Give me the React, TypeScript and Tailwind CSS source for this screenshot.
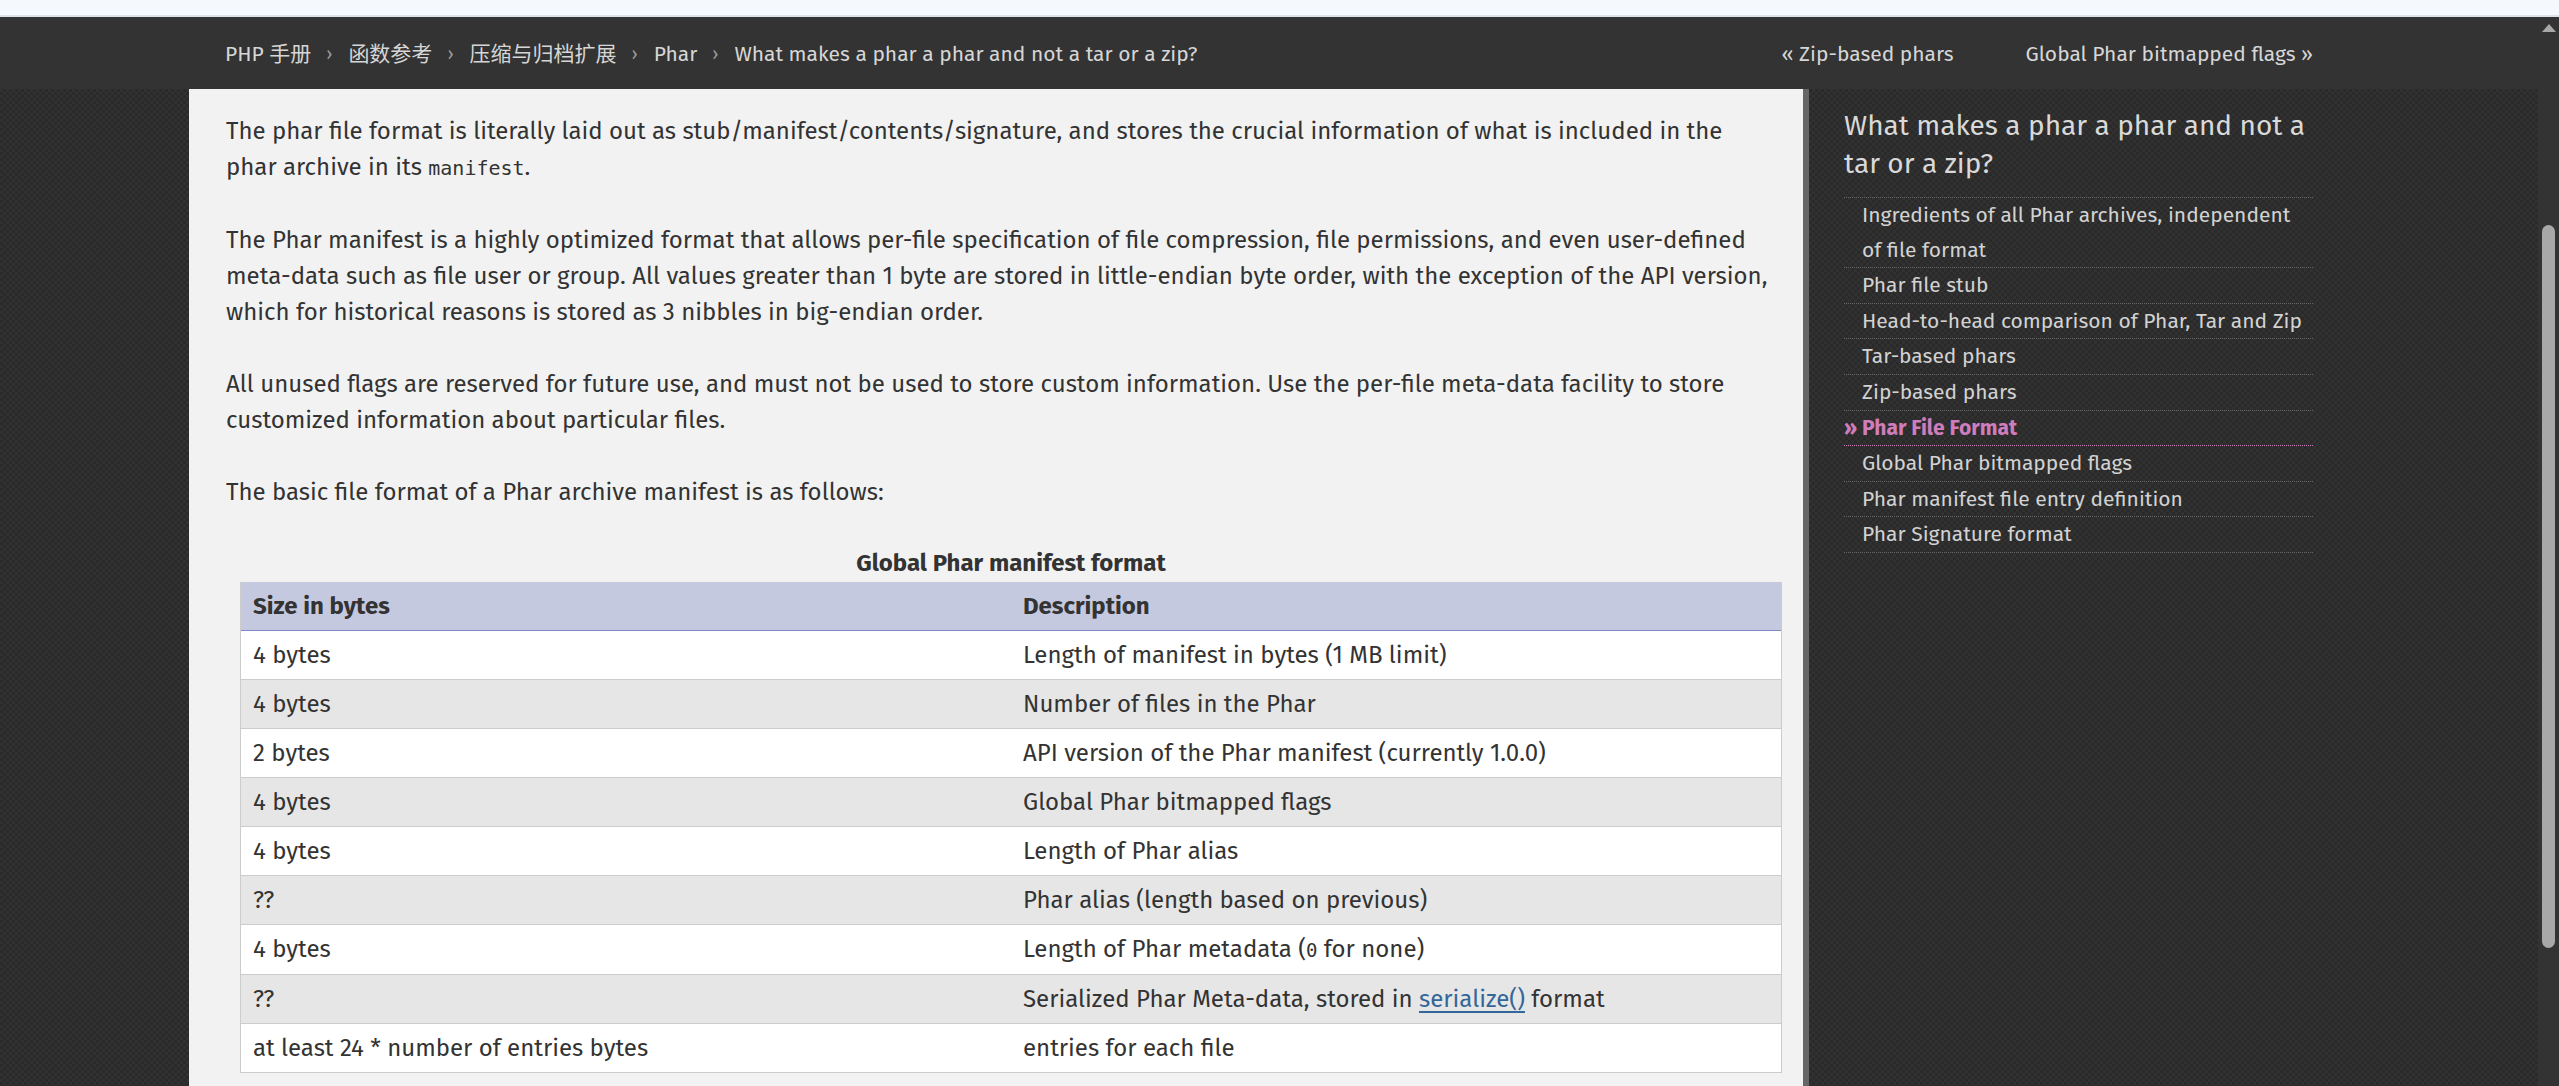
import React from "react";

const FONT = { fontFamily: '"Fira Sans", Roboto, "Noto Sans CJK SC", sans-serif' };

const rows: [string, React.ReactNode][] = [
  ["4 bytes", "Length of manifest in bytes (1 MB limit)"],
  ["4 bytes", "Number of files in the Phar"],
  ["2 bytes", "API version of the Phar manifest (currently 1.0.0)"],
  ["4 bytes", "Global Phar bitmapped flags"],
  ["4 bytes", "Length of Phar alias"],
  ["??", "Phar alias (length based on previous)"],
  [
    "4 bytes",
    <>
      Length of Phar metadata (<code className="font-['DejaVu_Sans_Mono',monospace] text-[19px]">0</code> for none)
    </>,
  ],
  [
    "??",
    <>
      Serialized Phar Meta-data, stored in{" "}
      <a className="text-[#336699] underline decoration-[#336699] underline-offset-4">serialize()</a> format
    </>,
  ],
  ["at least 24 * number of entries bytes", "entries for each file"],
];

const toc: { label: React.ReactNode; active?: boolean }[] = [
  {
    label: (
      <>
        Ingredients of all Phar archives, independent
        <br />
        of file format
      </>
    ),
  },
  { label: "Phar file stub" },
  { label: "Head-to-head comparison of Phar, Tar and Zip" },
  { label: "Tar-based phars" },
  { label: "Zip-based phars" },
  { label: "Phar File Format", active: true },
  { label: "Global Phar bitmapped flags" },
  { label: "Phar manifest file entry definition" },
  { label: "Phar Signature format" },
];

const crumbs = ["PHP 手册", "函数参考", "压缩与归档扩展", "Phar", "What makes a phar a phar and not a tar or a zip?"];

export default function App() {
  const pattern =
    "bg-[#2d2d2d] bg-[image:repeating-conic-gradient(#2a2a2a_0_25%,#313131_0_50%)] bg-[length:6px_6px]";
  return (
    <div className="w-[2559px] h-[1086px] overflow-hidden flex flex-col bg-[#333]" style={FONT}>
      <div className="h-[17px] shrink-0 bg-[#f5f8fd] border-b-2 border-[#dde1e8]" />
      <div className="flex-1 flex min-h-0">
        <div className="flex-1 flex flex-col min-w-0">
          {/* header */}
          <header className="h-[72px] shrink-0 bg-[#333] flex items-center pt-[3px] pl-[225px] pr-[225px] text-[21px] text-[#d6d6d6]">
            <nav className="flex items-center">
              {crumbs.map((c, i) => (
                <React.Fragment key={i}>
                  {i > 0 && <span className="pl-[15px] pr-[16px] text-[#9a9a9a] text-[18px]">›</span>}
                  <span>{c}</span>
                </React.Fragment>
              ))}
            </nav>
            <div className="ml-auto flex items-center gap-[72px]">
              <span>« Zip-based phars</span>
              <span>Global Phar bitmapped flags »</span>
            </div>
          </header>

          <div className={"flex-1 flex min-h-0 " + pattern}>
            <div className="w-[189px] shrink-0" />
            {/* main content */}
            <main className="w-[1614px] shrink-0 bg-[#f2f2f2] pl-[37px] pr-[21px] pt-[24px] text-[24px] leading-[36px] text-[#333]">
              <p className="whitespace-nowrap">
                The phar file format is literally laid out as stub/manifest/contents/signature, and stores the crucial
                information of what is included in the
                <br />
                phar archive in its{" "}
                <code className="font-['DejaVu_Sans_Mono',monospace] text-[20px]">manifest</code>.
              </p>
              <p className="mt-[36px] whitespace-nowrap">
                The Phar manifest is a highly optimized format that allows per-file specification of file compression,
                file permissions, and even user-defined
                <br />
                meta-data such as file user or group. All values greater than 1 byte are stored in little-endian byte
                order, with the exception of the API version,
                <br />
                which for historical reasons is stored as 3 nibbles in big-endian order.
              </p>
              <p className="mt-[36px] whitespace-nowrap">
                All unused flags are reserved for future use, and must not be used to store custom information. Use the
                per-file meta-data facility to store
                <br />
                customized information about particular files.
              </p>
              <p className="mt-[36px]">The basic file format of a Phar archive manifest is as follows:</p>

              <div className="mt-[35px] ml-[14px]">
                <div className="text-center font-bold h-[37px]">Global Phar manifest format</div>
                <div className="border-l border-r border-[#cccccc]">
                  <div className="grid grid-cols-2 bg-[#c4c9df] border-b border-[#7e8bc2] font-bold">
                    <div className="px-[12px] py-[6px]">Size in bytes</div>
                    <div className="px-[12px] py-[6px]">Description</div>
                  </div>
                  {rows.map(([a, b], i) => (
                    <div
                      key={i}
                      className={
                        "grid grid-cols-2 border-b border-[#cccccc] " + (i % 2 === 0 ? "bg-white" : "bg-[#e6e6e6]")
                      }
                    >
                      <div className="px-[12px] py-[6px]">{a}</div>
                      <div className="px-[12px] py-[6px]">{b}</div>
                    </div>
                  ))}
                </div>
              </div>
            </main>
            <div className="w-[6px] shrink-0 bg-[#666]" />
            {/* sidebar */}
            <aside className="flex-1 pl-[35px] pt-[18px]">
              <div className="w-[469px]">
                <h2 className="text-[28px] leading-[38px] text-[#d9d9d9] whitespace-nowrap">
                  What makes a phar a phar and not a
                  <br />
                  tar or a zip?
                </h2>
                <ul className="mt-[14px] border-t border-dotted border-[#666] text-[21px] leading-[34.6px]">
                  {toc.map((t, i) => (
                    <li
                      key={i}
                      className={
                        "border-b border-dotted whitespace-nowrap " +
                        (t.active ? "border-[#cf7dbb] text-[#cf7dbb] font-bold" : "border-[#666] text-[#d2d2d2] pl-[18px]")
                      }
                    >
                      {t.active ? <>» {t.label}</> : t.label}
                    </li>
                  ))}
                </ul>
              </div>
            </aside>
          </div>
        </div>
        {/* scrollbar */}
        <div className="w-[21px] shrink-0 bg-[#333] flex flex-col items-center pt-[7px]">
          <div className="w-0 h-0 border-l-[7px] border-r-[7px] border-b-[8px] border-l-transparent border-r-transparent border-b-[#a8a8a8]" />
          <div className="mt-[193px] w-[13px] h-[723px] rounded-full bg-[#a8a8a8]" />
        </div>
      </div>
    </div>
  );
}
